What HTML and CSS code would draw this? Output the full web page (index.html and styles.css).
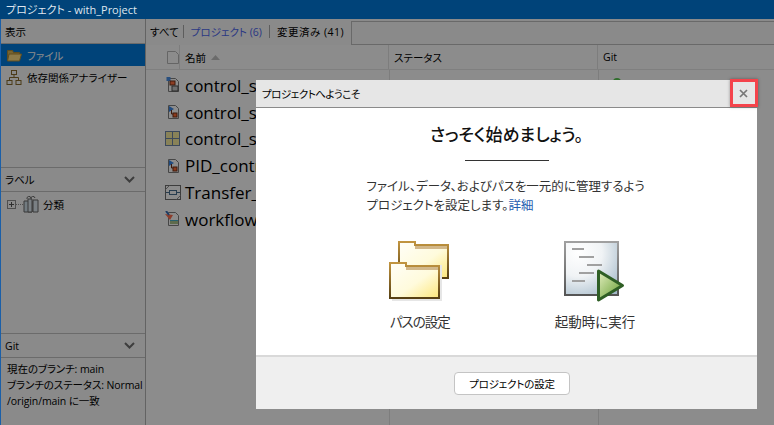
FILE: index.html
```html
<!DOCTYPE html>
<html lang="ja">

<head>
  <meta charset="UTF-8">
  <title>プロジェクト - with_Project</title>
  <link rel="stylesheet" href="styles.css">
</head>

<body>
  <div class="titlebar">プロジェクト - with_Project</div>

  <div class="window">
    <aside class="side">
      <section class="side-view">
        <div class="side-head view-head">表示</div>
        <div class="nav nav-on">
          <svg width="16" height="13" viewBox="0 0 16 13"><path d="M1.500 1.500h5l1 2h6v8h-12z" fill="#d8b45a" stroke="#b08c38"/><path d="M3 5h12.500l-2 7H1.500z" fill="#ffdf85" stroke="#b08c38"/></svg>
          <span>ファイル</span>
        </div>
        <div class="nav">
          <svg width="16" height="16" viewBox="0 0 16 16" fill="none" stroke="#8a6c2c"><rect x="5.500" y="1.500" width="5" height="4"/><rect x="1" y="11.500" width="5" height="4"/><rect x="10" y="11.500" width="5" height="4"/><path d="M8 5.500v3M3.500 11.500v-3h9v3"/></svg>
          <span>依存関係アナライザー</span>
        </div>
      </section>
      <section class="side-labels">
        <div class="side-head section-head">ラベル
          <svg width="11" height="7" viewBox="0 0 11 7"><path d="M1 1l4.500 4.500L10 1" fill="none" stroke="#707070" stroke-width="2"/></svg>
        </div>
        <div class="tree">
          <span class="plus"></span><span class="dots"></span>
          <svg width="16" height="17" viewBox="0 0 16 17"><path d="M1 5h8v11H1z" fill="#cfe0ea" stroke="#666"/><path d="M5 3h4v13H5zM10 4h5v12h-5z" fill="#dfeaf0" stroke="#666"/><path d="M4 3a2 2 0 0 1 4-1M8 3a2 2 0 0 1 4-1" fill="none" stroke="#666"/></svg>
          <span class="tree-name">分類</span>
        </div>
      </section>
      <section class="side-git">
        <div class="side-head section-head">Git
          <svg width="11" height="7" viewBox="0 0 11 7"><path d="M1 1l4.500 4.500L10 1" fill="none" stroke="#707070" stroke-width="2"/></svg>
        </div>
        <div class="git-info">
          <div>現在のブランチ: main</div>
          <div>ブランチのステータス: Normal</div>
          <div>/origin/main に一致</div>
        </div>
      </section>
    </aside>

    <main class="content">
      <div class="tabs">
        <span class="tab">すべて</span>
        <span class="tab tab-on">プロジェクト (6)</span>
        <span class="tab tab-changed">変更済み (41)</span>
        <span class="tab-rest"></span>
      </div>
      <div class="cols">
        <div class="col col-icon">
          <svg width="14" height="15" viewBox="0 0 14 15"><path d="M1.500 1.500h8l3 3v9h-11z" fill="none" stroke="#b8b8b8"/></svg>
        </div>
        <div class="col col-name">
          <span>名前</span>
          <svg width="9" height="5" viewBox="0 0 9 5"><path d="M4.500 0L9 5H0z" fill="#c4c4c4"/></svg>
        </div>
        <div class="col col-status">ステータス</div>
        <div class="col col-git">Git</div>
      </div>
      <div class="files">
        <div class="file">
          <svg width="16" height="16" viewBox="0 0 16 16"><path d="M3.500 1.500h7l3 3v10h-10z" fill="#fff" stroke="#808080"/><rect x="1.500" y="0" width="4" height="4" fill="#4a90e8"/><rect x="5" y="4" width="5" height="4" fill="#ff7040" stroke="#703018"/><rect x="7" y="9" width="6" height="5" fill="#c8c8c8" stroke="#505050"/></svg>
          <span class="file-name">control_system_bus_type</span>
          <span class="git-dot"></span>
        </div>
        <div class="file">
          <svg width="16" height="16" viewBox="0 0 16 16"><path d="M3.500 1.500h7l3 3v10h-10z" fill="#fff" stroke="#808080"/><path d="M4 2l5 3-5 3z" fill="#3a88e8"/><path d="M6.500 6v4h2" fill="none" stroke="#703018"/><rect x="8" y="9" width="4" height="4" fill="#ff6a33" stroke="#703018"/></svg>
          <span class="file-name">control_system</span>
        </div>
        <div class="file">
          <svg width="16" height="16" viewBox="0 0 16 16"><rect x=".5" y=".5" width="14" height="14" fill="#f8eda0" stroke="#6d86a7"/><path d="M7.500 .5v14M.5 7.500h14" stroke="#6d86a7"/></svg>
          <span class="file-name">control_system_data</span>
        </div>
        <div class="file">
          <svg width="16" height="16" viewBox="0 0 16 16"><path d="M3.500 1.500h7l3 3v10h-10z" fill="#fff" stroke="#808080"/><path d="M4 2l5 3-5 3z" fill="#3a88e8"/><path d="M6.500 6v4h2" fill="none" stroke="#703018"/><rect x="8" y="9" width="4" height="4" fill="#ff6a33" stroke="#703018"/></svg>
          <span class="file-name">PID_controller</span>
        </div>
        <div class="file">
          <svg width="16" height="16" viewBox="0 0 16 16"><rect x=".5" y=".5" width="15" height="14" fill="none" stroke="#707070"/><path d="M.5 4.500l4-4M15.500 10.500l-4 4" stroke="#909090"/><rect x="4.500" y="5.500" width="7" height="4" fill="#fff" stroke="#4a7090"/><path d="M1 7.500h3.500M11.500 7.500h3.500" stroke="#4a7090"/></svg>
          <span class="file-name">Transfer_function</span>
        </div>
        <div class="file">
          <svg width="16" height="16" viewBox="0 0 16 16"><path d="M3.500 1.500h7l3 3v10h-10z" fill="#fff" stroke="#808080"/><rect x="5" y="9" width="8" height="4" fill="#48b0c8"/><path d="M5 10h8v3H5z" fill="#f0d060" opacity=".6"/><path d="M0 3l8 1-3 5z" fill="#ff7050"/><path d="M1 0l3 4" stroke="#3a70b8" stroke-width="2"/></svg>
          <span class="file-name">workflow_script</span>
        </div>
      </div>
    </main>
  </div>

  <div class="overlay"></div>

  <div class="dialog">
    <div class="dialog-title">
      <span>プロジェクトへようこそ</span>
      <svg width="9" height="9" viewBox="0 0 9 9"><path d="M1 1l7 7M8 1L1 8" stroke="#787878" stroke-width="1.700"/></svg>
    </div>
    <div class="dialog-body">
      <h1>さっそく始めましょう。</h1>
      <hr class="rule">
      <p class="intro">ファイル、データ、およびパスを一元的に管理するよう<br>プロジェクトを設定します。<a href="#">詳細</a></p>
      <div class="choices">
        <div class="choice">
          <svg width="62" height="62" viewBox="0 0 62 62">
            <defs>
              <linearGradient id="fold" x1="0" y1="0" x2="1" y2="1">
                <stop offset="0" stop-color="#fffef8"/>
                <stop offset=".55" stop-color="#fffbdc"/>
                <stop offset="1" stop-color="#fde67a"/>
              </linearGradient>
              <linearGradient id="edge" x1="0" y1="0" x2="0" y2="1">
                <stop offset="0" stop-color="#c1943f"/>
                <stop offset="1" stop-color="#574013"/>
              </linearGradient>
            </defs>
            <path d="M10 1h16v3h33v33H10z" fill="url(#fold)" stroke="url(#edge)" stroke-width="2"/>
            <rect x="26" y="5" width="32" height="3" fill="#d2b88a"/>
            <rect x="3" y="24" width="50" height="36" fill="#e6e6e6"/>
            <path d="M1 22h16v3h33v32H1z" fill="url(#fold)" stroke="url(#edge)" stroke-width="2"/>
            <rect x="17" y="26" width="32" height="3" fill="#d2b88a"/>
          </svg>
          <span>パスの設定</span>
        </div>
        <div class="choice">
          <svg width="62" height="62" viewBox="0 0 62 62">
            <defs>
              <radialGradient id="doc" cx=".25" cy=".2" r="1">
                <stop offset="0" stop-color="#fff"/>
                <stop offset=".45" stop-color="#f0f3f5"/>
                <stop offset="1" stop-color="#a3b9c9"/>
              </radialGradient>
              <linearGradient id="frame" x1="0" y1="0" x2="0" y2="1">
                <stop offset="0" stop-color="#a0a0a0"/>
                <stop offset="1" stop-color="#555"/>
              </linearGradient>
              <linearGradient id="run" x1="0" y1="0" x2="1" y2="1">
                <stop offset="0" stop-color="#e4efc0"/>
                <stop offset="1" stop-color="#5f9a2c"/>
              </linearGradient>
            </defs>
            <rect x="1" y="1" width="53" height="53" fill="url(#doc)" stroke="url(#frame)" stroke-width="2"/>
            <path d="M8 8h12M15 16h15M23 24h15M15 32h15M8 40h13" stroke="#a0a0a0" stroke-width="2"/>
            <path d="M34.500 30l24 14.500-24 14.500z" fill="url(#run)" stroke="#2f5f25" stroke-width="3" stroke-linejoin="round"/>
          </svg>
          <span>起動時に実行</span>
        </div>
      </div>
    </div>
    <div class="dialog-foot">
      <button class="setup">プロジェクトの設定</button>
    </div>
  </div>
  <span class="close-mark"></span>
</body>

</html>
```

FILE: styles.css
```css
* {
  box-sizing: border-box;
}
html, body {
  height: 100%;
}
body {
  margin: 0;
  overflow: hidden;
  display: flex;
  flex-direction: column;
  background: #fff;
  color: #000;
  font-family: "Open Sans", "Noto Sans CJK JP", sans-serif;
  font-size: 10.500px;
  font-feature-settings: "palt";
}
svg {
  flex: none;
}

.titlebar {
  height: 19px;
  padding-left: 6px;
  background: #004379;
  color: #dfe6ee;
  font-size: 11px;
  line-height: 20px;
  position: relative;
  z-index: 2;
}
.window {
  flex: 1;
  min-height: 0;
  display: flex;
  border-left: 1px solid #1a5fa8;
}

.side {
  width: 145px;
  display: flex;
  flex-direction: column;
  background: #fbfbfb;
  border-right: 1px solid #b4b4b4;
}
.side-view {
  flex: 0 0 148px;
}
.side-labels {
  flex: 0 0 166px;
}
.side-git {
  flex: 1;
}
.side-head {
  display: flex;
  align-items: center;
  justify-content: space-between;
  padding: 0 10px 0 4px;
}
.view-head {
  height: 25px;
  border-bottom: 1px solid #c4c4c4;
}
.section-head {
  height: 25px;
  border-top: 1px solid #c4c4c4;
  border-bottom: 1px solid #c4c4c4;
}
.nav {
  height: 22px;
  display: flex;
  align-items: center;
  gap: 5px;
  padding-left: 5px;
}
.nav-on {
  background: #007adc;
  color: #fff;
}
.tree {
  height: 24px;
  display: flex;
  align-items: center;
  padding-left: 6px;
}
.tree-name {
  margin-left: 4px;
}
.plus {
  width: 9px;
  height: 9px;
  border: 1px solid #909090;
  background: linear-gradient(#555, #555) center/5px 1px no-repeat, linear-gradient(#555, #555) center/1px 5px no-repeat;
}
.dots {
  width: 7px;
  border-top: 1px dotted #909090;
}
.git-info {
  padding: 3px 6px;
  line-height: 16px;
  letter-spacing: -.1px;
  white-space: nowrap;
}

.content {
  flex: 1;
  min-width: 0;
  display: flex;
  flex-direction: column;
  background: #fff;
}
.tabs {
  height: 26px;
  flex: none;
  display: flex;
  padding-left: 4px;
  background: #fbfbfb;
}
.tab {
  padding: 0 4px 0 0;
  line-height: 26px;
  position: relative;
  white-space: nowrap;
}
.tab + .tab {
  padding: 0 7px 0 8px;
}
.tab + .tab::before {
  content: "";
  position: absolute;
  left: 0;
  top: 6px;
  bottom: 7px;
  border-left: 1px solid #aaa;
}
.tab-on {
  color: #4f68f0;
}
.tab-changed {
  letter-spacing: .5px;
}
.tab-rest {
  flex: 1;
  border: 1px solid #c0c0c0;
  border-right: none;
  margin-top: 2px;
}
.cols {
  height: 25px;
  flex: none;
  display: flex;
  border-bottom: 1px solid #e8e8e8;
}
.col {
  display: flex;
  align-items: center;
  padding-left: 5px;
  border-right: 1px solid #e4e4e4;
}
.col-icon {
  width: 34px;
  padding-left: 20px;
}
.col-name {
  width: 209px;
  gap: 5px;
}
.col-status {
  width: 209px;
}
.col-git {
  flex: 1;
  border-right: none;
}
.files {
  flex: 1;
  padding-top: 2px;
  background: linear-gradient(#e4e4e4, #e4e4e4) 243px 0/1px 100% no-repeat, linear-gradient(#e4e4e4, #e4e4e4) 452px 0/1px 100% no-repeat;
}
.file {
  height: 26.800px;
  display: flex;
  align-items: center;
  gap: 4px;
  padding-left: 19px;
  font-size: 17px;
  white-space: nowrap;
}
.file-name {
  flex: 0 0 424px;
}
.git-dot {
  width: 8px;
  height: 8px;
  align-self: flex-start;
  margin-top: 6px;
  border-radius: 50%;
  background: #58c850;
}

.overlay {
  position: absolute;
  left: 1px;
  right: 0;
  top: 19px;
  bottom: 0;
  background: rgba(0, 0, 0, .45);
}

.dialog {
  position: absolute;
  left: 256px;
  top: 80px;
  width: 501px;
  height: 329px;
  display: flex;
  flex-direction: column;
  background: #fff;
}
.dialog-title {
  height: 28px;
  flex: none;
  display: flex;
  align-items: center;
  justify-content: space-between;
  padding: 0 9px 0 6px;
  background: #e6e6e6;
  border-bottom: 1px solid #8a8a8a;
  letter-spacing: -.5px;
}
.close-mark {
  position: absolute;
  left: 730px;
  top: 79px;
  width: 28px;
  height: 28px;
  border: 3px solid #f4434b;
  box-shadow: 0 0 3px rgba(0, 0, 0, .35);
}
.dialog-body {
  flex: 1;
  display: flex;
  flex-direction: column;
  align-items: center;
}
h1 {
  margin: 15px 0 0;
  font-size: 17px;
  font-weight: 500;
  line-height: 24px;
  color: #111;
}
.rule {
  width: 84px;
  margin: 13px 0 0;
  border: 0;
  border-top: 1px solid #333;
}
.intro {
  width: 280px;
  margin: 16px 0 0;
  font-size: 12.500px;
  line-height: 19px;
  color: #333;
  white-space: nowrap;
}
.intro a {
  color: #1f5db0;
  text-decoration: none;
}
.choices {
  display: flex;
  gap: 104px;
  margin: 26px 0 0 11px;
}
.choice {
  display: flex;
  flex-direction: column;
  align-items: center;
  gap: 11px;
  font-size: 13.500px;
  line-height: 16px;
  color: #333;
}
.choice:first-child {
  letter-spacing: -1px;
}
.dialog-foot {
  height: 54px;
  flex: none;
  display: flex;
  align-items: center;
  justify-content: center;
  padding-left: 11px;
  background: #efefef;
  border-top: 2px solid #d9d9d9;
}
.setup {
  width: 116px;
  height: 23px;
  padding: 0;
  background: #fff;
  border: 1px solid #c4c4c4;
  border-radius: 4px;
  font: 10.500px "Open Sans", "Noto Sans CJK JP", sans-serif;
  font-feature-settings: "palt";
  letter-spacing: -.2px;
  color: #000;
}
```
